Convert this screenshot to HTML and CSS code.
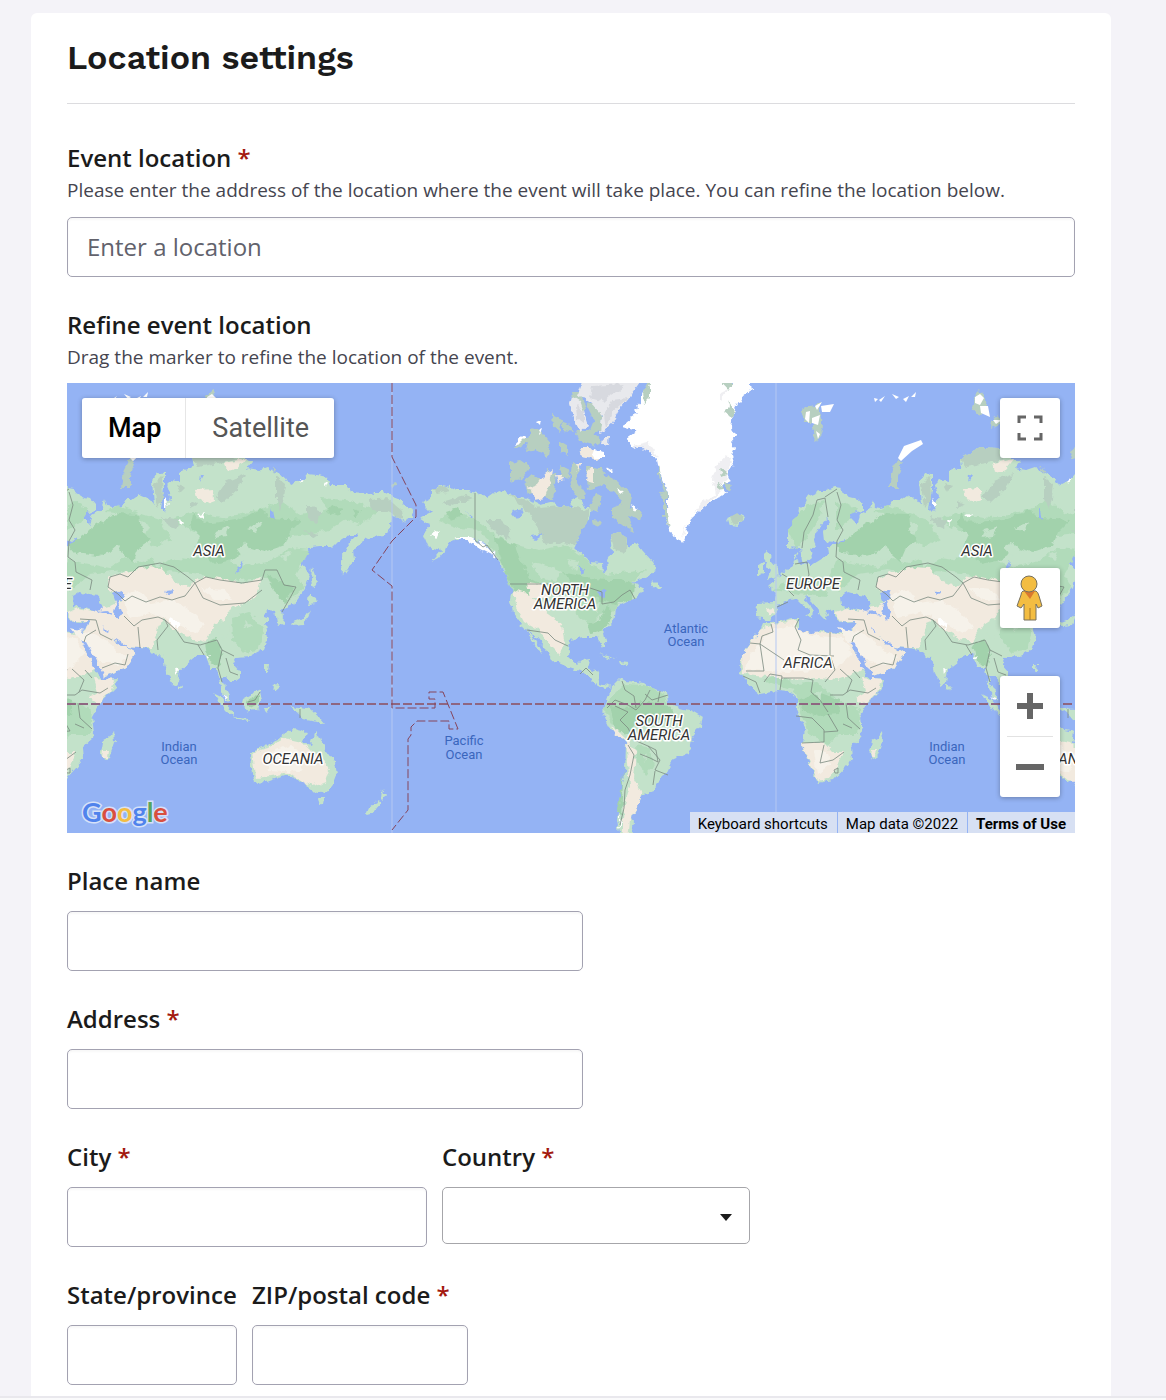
FILE: index.html
```html
<!DOCTYPE html>
<html lang="en">
<head>
<meta charset="utf-8">
<meta name="viewport" content="width=device-width, initial-scale=1">
<title>Location settings</title>
<link rel="stylesheet" href="styles.css">
</head>
<body>
<main class="card">
  <h1 class="card-title">Location settings</h1>
  <form class="form">
    <div class="field">
      <label class="label" for="location">Event location <span class="required">*</span></label>
      <p class="hint" id="location-hint">Please enter the address of the location where the event will take place. You can refine the location below.</p>
      <input class="input" id="location" type="text" placeholder="Enter a location" aria-describedby="location-hint">
    </div>

    <section class="field" aria-labelledby="refine-title">
      <h2 class="label" id="refine-title">Refine event location</h2>
      <p class="hint">Drag the marker to refine the location of the event.</p>
      <div class="map">
        <svg class="map-tiles" viewBox="67 383 1008 450" preserveAspectRatio="xMidYMid slice" role="img" aria-label="World map">
          <defs>
            <!-- roughens coastlines and vegetation edges -->
            <filter id="rough" filterUnits="userSpaceOnUse" x="-60" y="370" width="1200" height="480" color-interpolation-filters="sRGB">
              <feTurbulence type="fractalNoise" baseFrequency="0.16" numOctaves="2" seed="4" result="noise"/>
              <feDisplacementMap in="SourceGraphic" in2="noise" scale="7" xChannelSelector="R" yChannelSelector="G"/>
            </filter>
            <!-- Europe, Africa, Asia and Oceania; drawn once per world copy -->
            <g id="old-world">
              <g class="land">
                <path d="M20 535L20 547 24 550 29 545 32 548 34 560 38 562 44 557 42 550 48 546 46 538 52 526 60 517 62 522 55 532 56 541 69 542 77 538 76 543 67 545 59 547 60 555 52 560 44 565 39 565 31 563 27 560 31 553 27 555 25 565 22 567 14 573 5 582 0 586 9 593 7 602 -10 603 -12 610 -11 617 -5 618 -3 621 2 621 8 616 9 610 14 603 22 600 29 599 36 606 41 610 41 617 46 612 42 606 37 600 38 596 43 600 49 607 52 615 57 620 59 617 57 612 60 610 67 608 67 617 72 621 80 622 89 621 86 629 82 634 81 643 92 660 100 675 103 677 127 668 136 653 128 648 120 650 118 645 112 637 118 640 127 647 140 648 152 650 158 656 164 657 167 673 173 686 178 683 180 670 192 660 198 655 205 655 210 668 217 668 222 692 229 701 229 694 220 677 226 677 232 684 240 678 240 672 233 664 236 658 250 657 263 650 268 637 265 625 270 618 264 616 262 614 268 610 275 611 277 622 283 625 284 617 280 610 293 605 305 588 309 572 300 562 310 548 320 547 333 547 338 542 344 538 350 535 358 535 347 545 341 558 343 575 349 567 355 562 354 548 357 545 366 540 373 537 383 535 390 530 392 518 397 516 401 520 405 522 408 517 414 517 413 510 403 505 398 498 390 495 383 492 375 492 372 497 367 493 350 492 347 485 330 485 327 477 317 475 307 474 301 481 296 482 290 485 286 478 280 475 267 467 258 470 247 468 252 462 230 448 212 447 192 458 194 467 187 469 180 472 180 482 172 480 167 485 170 497 165 512 161 508 164 490 164 474 157 473 152 482 154 505 150 500 139 495 132 500 125 500 122 505 112 507 107 506 105 500 103 507 97 512 92 515 89 524 83 518 80 514 84 509 90 513 95 511 95 505 90 499 82 497 75 493 73 488 67 487 59 490 52 490 45 494 40 496 36 505 31 508 29 520Z"/>
                <path d="M82 643L79 634 62 632 52 630 48 635 42 633 31 630 31 619 25 619 5 623 -5 623 -8 630 -18 643 -26 655 -28 670 -22 682 -8 694 9 691 22 692 29 700 29 710 37 730 34 743 40 760 47 777 50 783 65 780 77 767 84 758 83 747 93 738 94 733 92 717 100 703 115 688 117 679 103 680 92 666Z"/>
                <path d="M114 731L115 741 109 757 104 759 101 752 103 741 109 738Z"/>
                <path d="M251 752L252 770 255 783 267 782 283 776 293 776 300 783 306 781 309 789 322 793 330 791 336 775 334 762 326 751 320 741 316 731 311 745 304 742 306 732 293 729 281 737 272 741 266 747Z"/>
                <path d="M318 799L324 799 323 804 320 805ZM382 789L384 794 388 794 383 801 381 799ZM378 800L380 803 372 814 365 815 368 808Z"/>
                <path d="M213 693L221 697 233 711 233 717 226 711 219 701ZM233 717L248 719 250 721 238 720ZM243 699L259 690 261 700 257 710 248 711 242 703ZM263 707L270 707 266 713 264 711ZM289 706L299 708 311 710 320 718 325 724 317 722 305 720 299 713ZM266 664L269 664 268 672 266 673ZM272 684L278 683 277 691 274 688ZM178 685L183 687 182 690 178 689Z"/>
                <path d="M312 567L317 581 313 588 311 580ZM309 594L316 598 317 604 307 605ZM310 609L307 618 304 625 292 626 293 622 304 618Z"/>
                <path d="M-2 550L4 555 3 560 10 568 11 577 -1 580 2 572 -4 562ZM-11 567L-5 563 -5 573 -11 575ZM44 612L44 618 37 614ZM-41 515L-36 518 -25 514 -22 520 -30 526 -38 525Z"/>
              </g>
              <path class="mid" d="M68 503L76 502 88 509 80 522 68 530ZM68 560L110 568 125 558 140 563 158 556 185 560 210 552 240 566 268 562 290 548 310 550 296 575 304 588 290 600 277 594 268 578 240 580 215 585 200 574 170 570 150 576 120 570 90 574 70 592 60 580ZM170 520L190 512 222 518 260 510 280 500 300 515 330 510 345 520 330 530 300 535 250 540 200 535ZM232 617L250 612 264 632 258 650 244 652 233 640ZM-6 680L12 676 28 684 50 682 70 700 92 710 90 735 70 735 60 745 42 735 34 715 26 690ZM20 530L30 514 40 505 55 500 52 516 38 540 28 548ZM5 590L30 575 60 582 58 597 30 594ZM320 498L346 500 380 510 360 525 335 518ZM104 512L120 505 136 512 160 520 172 540 158 548 144 540 150 526 130 514Z"/>
              <path class="deep" d="M97 525L118 513 140 514 142 530 150 540 138 548 132 562 118 550 98 556 75 553 68 545 84 535ZM192 512L204 524 236 520 262 510 270 518 302 520 290 532 285 545 265 552 250 548 232 560 214 564 195 548 200 536 190 526ZM266 574L282 582 294 588 285 603 277 596ZM205 644L216 638 224 655 218 668 208 660ZM30 700L50 692 72 700 70 714 50 716 36 710ZM246 701L258 694 258 704 250 708ZM332 505L342 508 338 516 328 512ZM352 508L362 510 356 518Z"/>
              <path class="land" d="M110 552L118 545 124 556 114 562ZM218 530L230 526 226 536 214 538ZM246 528L262 522 256 532ZM150 552L166 540 182 548 170 560 156 566ZM236 548L246 542 252 552 242 556ZM224 618L230 628 226 640 218 634ZM244 620L252 626 246 630ZM46 694L54 690 52 700ZM280 556L290 552 286 562Z"/>
              <path class="tundra" d="M192 458L212 447 230 448 236 460 213 464 198 467ZM215 497L225 482 245 474 240 486 222 503ZM276 477L286 485 284 498 280 510 276 500ZM307 505L322 512 316 522 307 520ZM154 484L162 476 163 500 157 508ZM370 500L388 498 402 510 404 520 388 512 372 510ZM162 517L180 520 176 528 166 524ZM-38 516L-26 515 -24 522 -34 525ZM304 530L318 534 312 538ZM176 484L186 486 180 492ZM190 500L198 504 190 508Z"/>
              <g class="sand">
                <path d="M67 612L79 608 92 611 110 606 122 600 108 588 108 578 122 573 146 567 162 568 172 580 188 587 203 576 220 578 242 584 262 578 256 597 246 603 232 608 226 618 215 625 204 642 190 638 172 628 164 618 158 628 152 648 140 648 127 647 112 637 118 645 128 648 136 653 127 668 103 677 92 660 82 640 89 621 72 621Z"/>
                <path d="M-8 630L4 624 28 621 31 630 42 633 62 632 80 636 86 652 96 668 84 675 70 680 50 678 24 680 0 676 -25 674 -26 655ZM94 678L115 680 110 692 98 704 88 698 98 692ZM34 743L56 743 64 752 76 752 68 770 60 779 50 781 42 763Z"/>
                <path d="M253 752L268 748 284 738 302 742 312 752 322 756 330 770 326 782 312 786 300 780 290 773 270 776 256 778ZM196 490L213 489 214 500 206 503 198 498ZM225 463L247 458 238 469 227 472ZM104 750L108 750 107 757 103 757ZM-2 609L4 608 7 613 1 617Z"/>
              </g>
              <path class="cream" d="M122 595L140 590 150 603 175 600 190 610 205 625 195 634 170 620 150 612 130 618ZM70 628L84 645 100 662 120 664 130 656 118 652 105 640 90 632ZM-18 655L4 630 28 624 32 632 50 636 76 638 84 654 70 668 20 672 -22 670ZM262 755L290 745 306 758 300 772 270 770ZM200 588L225 590 232 600 215 600ZM46 750L60 752 62 764 50 774Z"/>
              <g class="water">
                <path d="M72 597L80 592 90 595 98 596 104 609 98 612 80 607 73 606ZM112 593L121 590 125 596 118 602 122 614 119 620 114 613 116 604ZM82 643L86 642 103 673 104 679 99 676ZM102 626L108 632 106 633ZM166 592L173 591 170 595ZM235 573L243 560 240 570ZM98 612L112 616 108 611ZM272 506L275 520 272 518ZM201 474L204 475 200 482Z"/>
              </g>
              <path class="snow" d="M170 618L180 624 178 630 172 624ZM222 694L228 698 226 700ZM165 498L169 504 165 508ZM198 515L205 513 202 518ZM180 520L184 522 181 525ZM324 483L328 482 326 487ZM175 668L179 670 176 674ZM206 657L210 655 208 660ZM300 478L304 480 301 484Z"/>
              <!-- Arctic islands -->
              <path class="tundra" d="M121 487L124 470 130 458 134 464 130 476 130 487ZM207 395L212 390 215 396 220 410 212 417 204 407ZM224 420L230 415 234 423 223 428ZM33 410L40 407 52 403 52 412 56 426 50 440 44 434 47 422 36 422ZM302 452L308 447 312 456 303 458ZM272 466L276 469 275 473ZM390 484L396 482 398 486 391 487Z"/>
            </g>
            <!-- fine detail that keeps its clean edges: ice caps, borders, names -->
            <g id="old-world-detail">
              <path class="snow" d="M130 458L136 446 153 440 155 444 144 451 133 461ZM106 398L110 399 107 402ZM111 400L117 396 113 402ZM124 394L131 397 128 399ZM135 399L141 396 138 402ZM143 397L148 392 147 397ZM207 397L212 394 216 398 212 405 207 403ZM212 406L220 406 222 417 213 413ZM225 420L234 420 228 424ZM47 406L54 402 49 410ZM53 406L66 404 62 412 54 412ZM44 418L52 415 50 425 44 423ZM38 412L42 411 41 423 37 419ZM48 431L52 434 50 439Z"/>
              <path class="border" d="M69 492L73 505 69 520 75 530 69 541 68 557 75 562 76 572 92 580 90 590M108 587L110 577 120 574 128 577 138 567 160 563 174 567 188 577 195 583 185 596 178 598 172 600 160 597 146 602 132 596 125 601 118 594 108 587M195 583L206 577 220 580 242 583 262 580 265 570 277 570 284 585 296 587 290 598 282 612M195 583L203 598 220 605 245 603 262 590M124 616L134 626 142 620 158 617 165 620 168 626 157 640 158 650M140 648L138 627M165 620L176 630 184 642 200 645 217 640 222 650 234 656M222 650L218 668 222 682M226 658L230 672 238 675M198 645L204 655M80 619L96 620 100 634 112 640M84 642L86 636 96 630M102 668L115 663 125 665 128 654M31 619L27 627 33 640 30 650 42 655 66 656M62 632L62 655 67 670 57 682M-18 643L-8 644 -4 671 -22 671M-8 644L-6 636 5 632 3 624M-8 644L16 660M-25 676L-12 682 -8 693M-4 682L2 674 14 676 12 690M14 678L35 678 45 680 43 692 52 700 60 712M28 716L44 718 56 730 56 742 34 743M62 695L75 695 82 690 100 693 108 688M78 703L80 718 92 729M60 714L70 731 56 732M75 724L84 728M56 745L52 763 65 760 76 752M66 770L70 768 70 773 67 773ZM72 669L84 680 79 692M85 670L92 678M34 548L36 532 45 515 49 500 57 498 60 517M57 497L69 489M27 564L39 562 41 575 36 584 47 590 59 584 68 585M14 574L24 580 20 590 26 596M9 607L20 602M248 702L255 700 260 692M300 718L300 709"/>
              <g class="continents">
                <text x="209" y="556">ASIA</text>
                <text x="45" y="589">EUROPE</text>
                <text x="40" y="668">AFRICA</text>
                <text x="293" y="764">OCEANIA</text>
              </g>
              <g class="oceans">
                <text x="179" y="751">Indian</text>
                <text x="179" y="764">Ocean</text>
              </g>
            </g>
          </defs>

          <rect class="water" x="67" y="383" width="1008" height="450"/>

          <g filter="url(#rough)">
            <!-- the Americas -->
            <g class="land">
              <path d="M422 502L432 497 432 491 443 485 450 487 457 490 467 490 477 493 487 498 494 493 503 490 512 495 527 498 540 505 550 502 560 506 573 507 572 500 579 496 586 508 593 508 590 518 580 530 577 538 575 548 590 562 602 563 603 575 608 568 607 560 612 552 610 535 620 532 628 538 628 548 638 543 641 550 652 562 657 570 647 577 632 583 643 588 638 597 627 602 615 608 613 623 603 632 606 647 603 647 598 637 583 637 570 640 568 657 577 665 583 659 590 658 588 668 598 672 599 683 612 687 605 689 593 682 583 672 570 668 552 660 545 647 532 632 527 630 523 628 513 613 511 600 513 588 510 578 502 568 498 558 487 545 473 538 460 538 448 542 445 550 438 558 432 561 441 550 433 548 427 545 423 535 430 525 420 518 432 512Z"/>
              <path d="M612 687L620 679 627 681 645 683 653 689 667 693 668 702 680 708 692 711 702 717 700 727 692 738 690 752 673 760 667 773 657 783 655 790 642 795 639 805 632 817 634 823 630 840 620 840 617 820 620 800 625 773 626 743 610 728 603 713 607 700Z"/>
              <path d="M526 630L531 633 542 652 536 648 532 640ZM598 654L608 656 617 660 608 658ZM620 661L629 662 628 665 621 664ZM653 579L660 586 662 588 652 587Z"/>
            </g>
            <path class="mid" d="M437 520L455 512 476 520 495 535 515 545 540 550 565 545 582 556 605 575 645 570 632 583 620 603 612 612 600 615 590 625 578 618 570 598 540 592 512 590 500 560 480 530 460 528ZM607 702L625 684 645 685 665 695 668 705 655 712 620 718 612 725 604 710ZM636 745L650 748 655 765 645 775 637 762Z"/>
            <path class="deep" d="M494 536L515 545 520 560 532 580 550 590 530 596 514 590 505 572ZM562 572L590 578 604 580 620 580 634 584 632 600 615 604 600 600 580 590ZM610 705L628 708 640 702 668 706 676 716 666 722 640 718 630 735 615 728ZM588 625L602 617 608 605 612 618 604 630 590 634ZM624 766L621 815 617 810 621 790ZM446 512L458 508 462 516 450 520Z"/>
            <path class="land" d="M532 562L548 566 562 572 556 582 540 578ZM566 560L580 562 576 570ZM590 606L600 600 598 612ZM642 752L648 756 644 762Z"/>
            <path class="tundra" d="M510 495L527 500 540 508 560 506 590 510 588 520 577 538 575 546 562 542 545 545 540 532 530 515ZM610 535L620 532 628 538 627 552 615 550ZM485 520L500 520 510 530 508 540 494 530ZM442 502L465 495 473 498 450 506ZM433 490L445 486 450 491 437 494Z"/>
            <path class="sand" d="M513 590L528 594 545 612 562 624 564 640 560 655 550 645 538 630 524 622 515 605ZM527 583L545 585 548 598 530 598ZM626 740L636 750 634 780 642 795 639 805 630 820 628 840 621 840 624 808 630 785ZM610 726L622 733 628 744 614 732Z"/>
            <path class="water" d="M512 512L524 510 518 519ZM530 536L545 534 536 540ZM577 565L586 570 582 574ZM466 512L473 518 470 518ZM596 592L604 590 606 597 600 596Z"/>
            <path class="snow" d="M453 537L470 537 487 546 498 558 480 549 466 540ZM431 535L440 530 436 540ZM619 815L622 822 619 828Z"/>

            <!-- Canadian Arctic and Greenland -->
            <path class="tundra" d="M510 462L520 460 530 467 522 478 510 482ZM530 428L540 430 550 443 548 456 535 450 526 453ZM515 448L524 435 530 440 518 448ZM552 415L562 420 560 432 553 426ZM561 442L568 444 568 456 561 452ZM524 481L532 474 542 480 540 492 528 494ZM548 470L556 474 553 500 542 498ZM560 465L570 470 568 480 561 477ZM575 430L590 430 602 440 598 446 580 440ZM572 462L580 466 578 482 586 495 580 500 572 490 570 478ZM586 466L600 468 605 475 618 482 632 495 630 508 642 512 640 520 628 516 634 532 625 528 612 518 612 508 622 504 615 492 603 485 588 490ZM595 495L602 496 598 512 588 508ZM591 519L602 520 600 527 592 524ZM585 402L601 405 602 430 588 435 594 420ZM561 422L568 424 574 432 564 430ZM572 392L580 392 586 408 578 425ZM640 400L652 375 665 375 650 412ZM708 392L720 375 732 375 733 412 720 410Z"/>
            <path class="ice" d="M585 375L645 375 630 396 620 408 610 428 600 433 602 415 590 402 578 395ZM572 395L580 400 588 425 580 432 572 415 570 402ZM603 437L609 437 608 445 602 444Z"/>
            <path class="shade" d="M592 386L625 384 604 402 590 398ZM612 400L628 398 612 412 606 430 604 414ZM576 404L584 412 584 424 577 418Z"/>
            <path class="sand" d="M587 471L593 466 593 482 586 480ZM580 448L590 448 603 455 597 460 582 457ZM545 474L553 468 550 484 545 498 534 500 532 490 527 488 538 484ZM575 464L582 464 578 470ZM556 475L562 475 564 480 558 482Z"/>
            <path class="snow" d="M594 450L604 452 604 458 592 458ZM515 444L522 436 528 435 518 445ZM536 422L541 420 540 426ZM538 430L542 428 540 434ZM606 466L613 470 610 473ZM617 488L622 492 619 494ZM631 505L638 509 634 511Z"/>
            <path class="snow" d="M655 375L647 390 640 394 640 402 634 410 638 414 628 420 623 427 637 431 627 438 630 445 640 448 648 448 656 460 658 470 663 480 668 492 668 505 665 518 670 530 676 539 683 542 688 527 692 518 707 505 727 492 722 486 731 482 727 472 734 463 732 456 735 448 731 442 736 436 731 428 733 415 738 404 742 397 752 390 750 375 738 375 729 390 715 375Z"/>
            <path class="ice-edge" d="M632 446L648 442 654 450 658 460 652 452ZM727 455L732 462 726 472 728 478 718 488 722 491 706 506 694 514 702 502 715 494 712 480 716 465ZM720 392L728 388 720 402ZM684 532L687 522 680 540Z"/>
            <path class="tundra" d="M658 466L662 482 668 492 666 508 670 530 664 516 664 500 660 495 664 490 658 474ZM720 468L727 474 722 476ZM716 482L724 488 717 489ZM724 482L731 486 728 490ZM728 400L734 410 732 418 724 412 730 406ZM643 390L650 386 650 398 644 404Z"/>

            <use href="#old-world"/>
            <use href="#old-world" x="768"/>
          </g>
          <path class="border" d="M475 493V540L483 547 487 545 498 560M510 584L555 584 590 588 602 592 602 604 614 602 622 595 630 590 635 599M527 630L548 633 555 640 568 646M580 674L586 668 593 675M607 708L615 700 628 705 636 710 645 700 650 690M622 681L625 690 634 696 636 708M615 706L628 712 620 720 628 728 634 740 648 746 660 760 655 770 668 775M628 745L634 755 630 775 625 790 624 808 620 825M648 746L656 750 658 762 650 758 640 754M655 771L653 785M645 694L652 700 668 695M660 691L658 702"/>
          <path class="seam" d="M392 383V833M776 383V833"/>
          <path class="equator" d="M67 704H1075"/>
          <path class="dateline" d="M392 383V457L416 505V517L392 541 372 570 392 586V708H435V699H429V692H443L458 729H449V721H417L411 727V735L408 739V810L392 830"/>
          <use href="#old-world-detail"/>
          <use href="#old-world-detail" x="768"/>
          <g class="continents">
            <text x="565" y="595">NORTH</text>
            <text x="565" y="609">AMERICA</text>
            <text x="659" y="726">SOUTH</text>
            <text x="659" y="740">AMERICA</text>
          </g>
          <g class="oceans">
            <text x="686" y="633">Atlantic</text>
            <text x="686" y="646">Ocean</text>
            <text x="464" y="745">Pacific</text>
            <text x="464" y="759">Ocean</text>
          </g>
        </svg>

        <div class="map-types">
          <button class="map-type active" type="button">Map</button>
          <button class="map-type" type="button">Satellite</button>
        </div>

        <div class="map-controls">
          <button class="map-button" type="button" aria-label="Toggle fullscreen view">
            <svg width="28" height="28" viewBox="0 0 28 28"><path class="glyph-line" d="M3 9V3H10M18 3H25V9M25 19V25H18M10 25H3V19"/></svg>
          </button>
          <div class="map-nav">
            <button class="map-button" type="button" aria-label="Street View">
              <svg width="30" height="46" viewBox="0 0 30 46">
                <path class="pegman" d="M8 16H21Q23 17 24 21L27 31 23 33 21 29V45H9V29L6 33 2 31 6 20Q6 17 8 16Z"/>
                <path class="pegman-scarf" d="M9 16H20L15 24Z"/>
                <path class="pegman-line" d="M15 33V45"/>
                <circle class="pegman" cx="14" cy="9" r="8"/>
              </svg>
            </button>
            <div class="zoom">
              <button class="zoom-button" type="button" aria-label="Zoom in"><svg width="28" height="28" viewBox="0 0 28 28"><path class="glyph" d="M11 1H17V11H27V17H17V27H11V17H1V11H11Z"/></svg></button>
              <button class="zoom-button" type="button" aria-label="Zoom out"><svg width="28" height="28" viewBox="0 0 28 28"><path class="glyph" d="M0 11H28V17H0Z"/></svg></button>
            </div>
          </div>
        </div>

        <a class="logo" href="#google" aria-label="Google"><span class="blue">G</span><span class="red">o</span><span class="yellow">o</span><span class="blue">g</span><span class="green">l</span><span class="red">e</span></a>
        <div class="attribution">
          <button class="credit" type="button">Keyboard shortcuts</button>
          <span class="credit">Map data ©2022</span>
          <a class="credit terms" href="#terms">Terms of Use</a>
        </div>
      </div>
    </section>

    <div class="field half">
      <label class="label" for="place">Place name</label>
      <input class="input" id="place" type="text">
    </div>
    <div class="field half">
      <label class="label" for="address">Address <span class="required">*</span></label>
      <input class="input" id="address" type="text">
    </div>
    <div class="row">
      <div class="field city">
        <label class="label" for="city">City <span class="required">*</span></label>
        <input class="input" id="city" type="text">
      </div>
      <div class="field country">
        <label class="label" for="country">Country <span class="required">*</span></label>
        <div class="select-wrap">
          <select class="select" id="country"><option value=""></option></select>
          <svg class="caret" width="12" height="8" viewBox="0 0 12 8" aria-hidden="true"><path d="M0 0H12L6 7Z"/></svg>
        </div>
      </div>
    </div>
    <div class="row">
      <div class="field state">
        <label class="label" for="state">State/province</label>
        <input class="input" id="state" type="text">
      </div>
      <div class="field zip">
        <label class="label" for="zip">ZIP/postal code <span class="required">*</span></label>
        <input class="input" id="zip" type="text">
      </div>
    </div>
  </form>
</main>
</body>
</html>
```
FILE: styles.css
```css
* { box-sizing: border-box; }

html { background: #fafafb; }

body {
  margin: 0;
  padding: 13px 55px 0 31px;
  border-bottom: 2px solid #e9e8ed;
  background: #f4f3f8;
  color: #1b1b1b;
  font-family: "Open Sans", "Noto Sans", sans-serif;
}

.card {
  padding: 19px 36px 11px;
  background: #fff;
  border-radius: 6px 6px 0 0;
}

.card-title {
  margin: 0 0 36px;
  padding-bottom: 21px;
  border-bottom: 1px solid #dcdcdf;
  font-family: "Work Sans", Inter, sans-serif;
  font-size: 34px;
  font-weight: 600;
  line-height: 50px;
}

.form {
  display: flex;
  flex-direction: column;
  gap: 30px;
}

.field {
  display: flex;
  flex-direction: column;
}

.label {
  margin: 0;
  font-size: 24px;
  font-weight: 600;
  line-height: 36px;
  white-space: nowrap;
}

.required { color: #a3190f; }

.hint {
  margin: 0;
  color: #45454f;
  font-size: 19px;
  line-height: 29px;
}

.input,
.select {
  width: 100%;
  border: 1px solid #a3a2b1;
  border-radius: 5px;
  background: #fff;
  color: #1b1b1b;
  font: 24px/36px "Open Sans", "Noto Sans", sans-serif;
}

.input {
  height: 60px;
  margin-top: 12px;
  padding: 0 19px 1px;
  box-shadow: inset 0 2px 2px rgba(0, 0, 0, 0.03);
}

.input::placeholder { color: #62626c; opacity: 1; }

.half { width: 516px; max-width: 100%; }

.row {
  display: flex;
  flex-wrap: wrap;
  gap: 15px;
}

.city { width: 360px; }
.country { width: 308px; }
.state { width: 170px; }
.zip { width: 216px; }

.select-wrap {
  display: grid;
  align-items: center;
  margin-top: 12px;
}

.select {
  grid-area: 1 / 1;
  height: 57px;
  padding: 0 44px 0 19px;
  border-color: #a6a6aa;
  appearance: none;
}

.caret {
  grid-area: 1 / 1;
  justify-self: end;
  margin: 4px 18px 0 0;
  fill: #1b1b1b;
  pointer-events: none;
}

/* Map */

.map {
  position: relative;
  height: 450px;
  margin-top: 11px;
  overflow: hidden;
  font-family: Roboto, sans-serif;
}

.map-tiles {
  display: block;
  width: 100%;
  height: 100%;
}

.water { fill: #94b3f4; }
.land { fill: #c3e2ca; }
.mid { fill: #b1dbba; }
.deep { fill: #a2d2ac; }
.tundra { fill: #b7cfc0; }
.sand { fill: #f2eadf; }
.cream { fill: #f6f2ea; }
.snow { fill: #fff; }
.ice { fill: #e8e9ed; }
.shade { fill: #d7d9df; }
.ice-edge { fill: #efeff2; }
.border { fill: none; stroke: #7b8a80; stroke-width: 1; opacity: 0.8; }
.seam { fill: none; stroke: #b5c8f2; stroke-width: 1; }

.equator,
.dateline {
  fill: none;
  stroke: #8e6681;
  stroke-width: 2;
  stroke-dasharray: 9 3;
}

.dateline {
  stroke: #85445a;
  stroke-width: 1;
}

.continents,
.oceans {
  text-anchor: middle;
  font-family: Roboto, sans-serif;
}

.continents {
  fill: #333;
  stroke: #fff;
  stroke-width: 3;
  stroke-linejoin: round;
  paint-order: stroke;
  font-size: 15px;
  font-style: italic;
}

.oceans {
  fill: #3a66bd;
  font-size: 13px;
}

.map-types {
  position: absolute;
  top: 15px;
  left: 15px;
  display: flex;
  border-radius: 3px;
  box-shadow: 0 1px 5px rgba(0, 0, 0, 0.3);
}

.map-type {
  height: 60px;
  padding: 0 25px 0 26px;
  border: 0;
  border-radius: 0 3px 3px 0;
  background: #fff;
  color: #565656;
  font: 27px/60px Roboto, sans-serif;
}

.map-type.active {
  padding-right: 24px;
  border-right: 1px solid #e6e6e6;
  border-radius: 3px 0 0 3px;
  color: #000;
  font-weight: 500;
}

.map-controls {
  position: absolute;
  inset: 15px 15px 36px auto;
  display: flex;
  flex-direction: column;
  justify-content: space-between;
}

.map-nav {
  display: grid;
  gap: 48px;
}

.map-button,
.zoom {
  width: 60px;
  border: 0;
  border-radius: 3px;
  background: #fff;
  box-shadow: 0 1px 5px rgba(0, 0, 0, 0.3);
}

.map-button,
.zoom-button {
  display: grid;
  place-items: center;
  height: 60px;
  padding: 0;
}

.zoom-button {
  width: 46px;
  margin: 0 auto;
  border: 0;
  background: none;
}

.zoom-button + .zoom-button {
  height: 61px;
  border-top: 1px solid #e2e2e2;
}

.glyph { fill: #666; }
.glyph-line { fill: none; stroke: #666; stroke-width: 3; }
.pegman { fill: #f3bd42; stroke: #76705f; stroke-width: 1; }
.pegman-scarf { fill: #d9792f; }
.pegman-line { stroke: #a87926; stroke-width: 1; }

.logo {
  position: absolute;
  bottom: 4px;
  left: 15px;
  font-family: Lato, sans-serif;
  font-size: 27px;
  font-weight: 700;
  line-height: 34px;
  text-decoration: none;
  -webkit-text-stroke: 3px #d6e1f8;
  paint-order: stroke fill;
}

.blue { color: #5083ec; }
.red { color: #d9503f; }
.yellow { color: #f3bd42; }
.green { color: #58a55d; }

.attribution {
  position: absolute;
  right: 0;
  bottom: 0;
  display: flex;
  gap: 1px;
}

.credit {
  height: 21px;
  padding: 0 9px 0 8px;
  border: 0;
  background: #d7e0f3;
  color: #000;
  font: 15px/24px Roboto, sans-serif;
  text-decoration: none;
}

.terms { font-weight: 700; }
```
